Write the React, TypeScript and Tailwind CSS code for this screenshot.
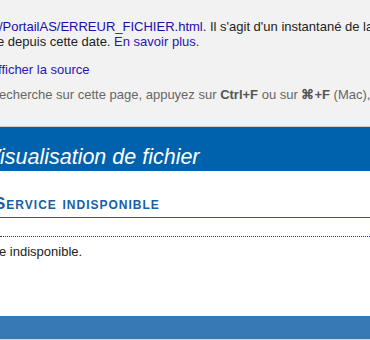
import * as React from 'react';

export default function App() {
  return (
    <div className="w-[370px] h-[340px] overflow-hidden bg-white font-['Liberation_Sans',Arial,sans-serif]">
      {/* Google cache banner */}
      <div className="h-[127px] border-b border-[#cccccc] bg-[#f2f2f2] pt-[19px] text-[13px] leading-[15px] text-[#222222]">
        <p className="-ml-[1px] whitespace-nowrap">
          <a className="text-[#1a0dab]">/PortailAS/ERREUR_FICHIER.html</a>. Il s'agit d'un instantané de la page telle qu'elle
        </p>
        <p className="-ml-[3px] whitespace-nowrap">
          e depuis cette date. <a className="text-[#2a14b5]">En savoir plus.</a>
        </p>
        <p className="-ml-[2px] mt-[13px] whitespace-nowrap">
          <a className="text-[#2a14b5]">fficher la source</a>
        </p>
        <p className="-ml-[1px] mt-[10px] whitespace-nowrap text-[#666666]">
          echerche sur cette page, appuyez sur <b className="text-[#555555]">Ctrl+F</b> ou sur{' '}
          <b className="text-[#555555]">⌘+F</b> (Mac), puis utilisez la barre de recherche.
        </p>
      </div>

      {/* title band */}
      <div className="h-[44px] bg-[#0062ad] pt-[18px]">
        <h1 className="-ml-[14px] whitespace-nowrap text-[21.5px] leading-[24px] italic text-white">
          Visualisation de fichier
        </h1>
      </div>

      <div className="pt-[23px]">
        <h2 className="-ml-[6px] whitespace-nowrap border-b border-[#1f5f9e] pb-[3px] text-[17px] leading-[20px] font-bold tracking-[1px] text-[#1760a8] [font-variant:small-caps]">
          Service indisponible
        </h2>
        <div className="mt-[18px] border-t border-dotted border-[#1d3d6b]" />
        <p className="-ml-[1px] mt-[7px] whitespace-nowrap text-[13px] leading-[15px] text-[#222222]">
          e indisponible.
        </p>
        <div className="mt-[57px] h-[24px] border-b border-[#c9d5e3] bg-[#377ab3]" />
      </div>
    </div>
  );
}
